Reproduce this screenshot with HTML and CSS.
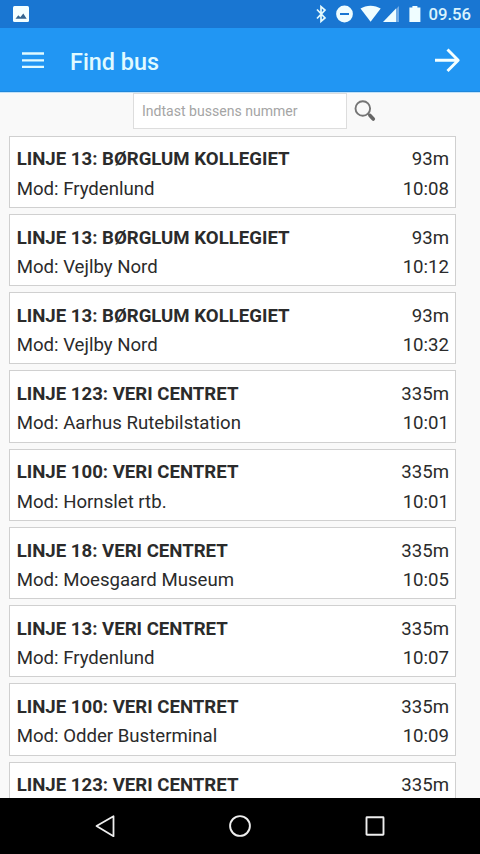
FILE: index.html
```html
<!DOCTYPE html>
<html lang="da">
<head>
<meta charset="utf-8">
<title>Find bus</title>
<link rel="stylesheet" href="styles.css">
</head>
<body>
<div class="screen">
  <header class="status">
    <svg class="status-photo" width="16" height="16" viewBox="0 0 16 16"><rect width="16" height="16" rx="1.5" fill="#f4ffff"/><path d="M2.5 12.7 5.3 9.3l2 2 3-3.900 3.400 5.300z" fill="#35658f"/></svg>
    <svg class="status-icons" width="112" height="28" viewBox="0 0 112 28">
      <path d="M5 9.5l8 8.500-4 3.500v-15l4 3.500-8 8.500" fill="none" stroke="#e5fafd" stroke-width="1.700"/>
      <circle cx="32.500" cy="14" r="8.400" fill="#effdff"/><path d="M28 14h9" stroke="#1976d2" stroke-width="2"/>
      <path d="M48.500 8.600C54 4.700 63 4.700 68.700 8.600L58.600 21.800z" fill="#effdff"/>
      <path d="M87 6v16H84V9z" fill="#6faae5"/><path d="M84 8.500V22H71z" fill="#effdff"/>
      <path d="M97.400 7.500h3V6h5v1.500h3V22h-11z" fill="#effdff"/>
    </svg>
    <span class="clock">09.56</span>
  </header>
  <div class="appbar">
    <svg class="menu" width="24" height="18" viewBox="0 0 24 18"><path d="M1 2.500h22M1 9.400h22M1 15.800h22" stroke="#e0faff" stroke-width="2.300"/></svg>
    <h1>Find bus</h1>
    <svg class="next" width="28" height="28" viewBox="0 0 28 28"><path d="M2 14.300h23M14.500 3.500l10.700 10.800-10.700 10.800" fill="none" stroke="#f4ffff" stroke-width="2.900" stroke-linejoin="round"/></svg>
  </div>
  <main class="content">
    <div class="search">
      <input class="search-input" type="text" placeholder="Indtast bussens nummer">
      <svg width="24" height="24" viewBox="0 0 24 24"><circle cx="9.800" cy="9.500" r="7.300" fill="none" stroke="#757575" stroke-width="1.900"/><path d="M15 14.500l2 2" stroke="#757575" stroke-width="2"/><path d="M17 16.500l3.300 3.500" stroke="#666" stroke-width="3.600" stroke-linecap="round"/></svg>
    </div>
    <ul class="list">
      <li class="card"><div class="row"><b>LINJE 13: BØRGLUM KOLLEGIET</b><span>93m</span></div><div class="row"><span>Mod: Frydenlund</span><span>10:08</span></div></li>
      <li class="card"><div class="row"><b>LINJE 13: BØRGLUM KOLLEGIET</b><span>93m</span></div><div class="row"><span>Mod: Vejlby Nord</span><span>10:12</span></div></li>
      <li class="card"><div class="row"><b>LINJE 13: BØRGLUM KOLLEGIET</b><span>93m</span></div><div class="row"><span>Mod: Vejlby Nord</span><span>10:32</span></div></li>
      <li class="card"><div class="row"><b>LINJE 123: VERI CENTRET</b><span>335m</span></div><div class="row"><span>Mod: Aarhus Rutebilstation</span><span>10:01</span></div></li>
      <li class="card"><div class="row"><b>LINJE 100: VERI CENTRET</b><span>335m</span></div><div class="row"><span>Mod: Hornslet rtb.</span><span>10:01</span></div></li>
      <li class="card"><div class="row"><b>LINJE 18: VERI CENTRET</b><span>335m</span></div><div class="row"><span>Mod: Moesgaard Museum</span><span>10:05</span></div></li>
      <li class="card"><div class="row"><b>LINJE 13: VERI CENTRET</b><span>335m</span></div><div class="row"><span>Mod: Frydenlund</span><span>10:07</span></div></li>
      <li class="card"><div class="row"><b>LINJE 100: VERI CENTRET</b><span>335m</span></div><div class="row"><span>Mod: Odder Busterminal</span><span>10:09</span></div></li>
      <li class="card"><div class="row"><b>LINJE 123: VERI CENTRET</b><span>335m</span></div></li>
    </ul>
  </main>
  <nav class="navbar">
    <svg width="22" height="24" viewBox="0 0 22 24"><path d="M2.500 12 19.500 2.200v20z" fill="none" stroke="#eee" stroke-width="1.800" stroke-linejoin="round"/></svg>
    <svg width="24" height="24" viewBox="0 0 24 24"><circle cx="12" cy="12" r="9.900" fill="none" stroke="#eee" stroke-width="1.900"/></svg>
    <svg width="22" height="24" viewBox="0 0 22 24"><rect x="2.500" y="3.200" width="17" height="17.500" rx=".5" fill="none" stroke="#eee" stroke-width="1.900"/></svg>
  </nav>
</div>
</body>
</html>
```
FILE: styles.css
```css
* { box-sizing: border-box; }
body { margin: 0; font-family: Roboto, sans-serif; color: #2b2b2b; }
svg { display: block; flex: none; }
.screen { width: 480px; height: 854px; display: flex; flex-direction: column; overflow: hidden; background: #f9f9f9; }
.status { flex: none; height: 28px; display: flex; align-items: center; background: #1976d2; padding: 0 9px 0 13px; }
.status-icons { margin-left: auto; }
.clock { width: 43px; margin-left: 4px; font-size: 16.7px; font-weight: 500; line-height: 28px; color: #d9f3fd; padding-top: 2px; text-align: right; }
.appbar { flex: none; height: 64px; display: flex; align-items: center; padding: 2px 19px 0 21px; background: #2196f3; border-bottom: 1px solid #1f87db; }
.menu { margin-bottom: 2px; }
.appbar h1 { margin: 2px auto 0 25px; font-size: 23.4px; line-height: 32px; font-weight: 500; color: #e0faff; }
.next { margin-bottom: 1px; }
.content { flex: 1; min-height: 0; overflow: hidden; border-top: 1px solid #c2e2f9; }
.search { height: 42.5px; display: flex; gap: 6px; padding-left: 133px; }
.search-input { width: 214px; height: 36px; border: 1px solid #ddd; background: #fff; padding: 0 8px; font: 14.05px Roboto, sans-serif; outline: 0; }
.search-input::placeholder { color: #a5a5a5; opacity: 1; }
.search svg { margin-top: 6px; }
.list { list-style: none; margin: 0; padding: 0 24px 0 9px; display: flex; flex-direction: column; gap: 6px; }
.card { flex: none; height: 72.25px; border: 1.5px solid #d0d0d0; background: #fff; padding: 8.9px 6px 0 6.7px; }
.row { display: flex; justify-content: space-between; font-size: 18.63px; line-height: 29.3px; white-space: nowrap; }
.row b { font-weight: 700; }
.navbar { flex: none; height: 56px; background: #000; display: flex; justify-content: space-between; align-items: center; padding: 0 94px; }
```
